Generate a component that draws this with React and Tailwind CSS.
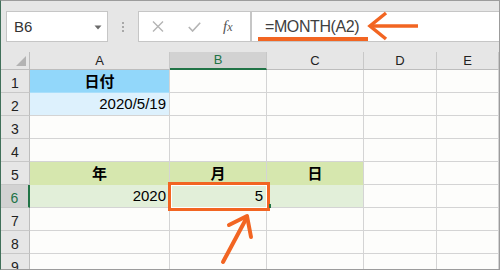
import clsx from "clsx";

const GRID = "border-r border-r-[#d4d4d4] border-b";

function Cell({ w, className, children }) {
  return (
    <div
      className={clsx(
        "relative shrink-0 h-full flex items-end px-[3px] pb-[3px] leading-none text-black",
        GRID,
        w,
        className
      )}
    >
      {children}
    </div>
  );
}

function RowHead({ n, active }) {
  return (
    <div
      className={clsx(
        "shrink-0 w-[29px] h-full flex items-end justify-center pb-[2px] text-[14px] leading-none border-b border-b-[#c8c8c8]",
        active
          ? "bg-[#d2d2d2] text-[#217346] border-r-2 border-r-[#217346]"
          : "bg-[#e6e6e6] text-[#222] border-r border-r-[#bdbdbd]"
      )}
    >
      {n}
    </div>
  );
}

function Row({ n, active, children }) {
  return (
    <div className="flex h-[23px] shrink-0">
      <RowHead n={n} active={active} />
      {children}
    </div>
  );
}

function EmptyCells({ from = 0 }) {
  const widths = ["w-[140px]", "w-[97px]", "w-[97px]", "w-[73px]", "flex-1"];
  return widths.slice(from).map((w, i) => (
    <Cell key={i} w={w} className="border-b-[#d4d4d4] bg-[#fdfdfb]" />
  ));
}

export default function App() {
  return (
    <div className="relative w-[500px] h-[270px] overflow-hidden border border-[#9c9c9c] border-l-[#41705a] bg-[#e6e6e6] font-['Liberation_Sans','Noto_Sans_CJK_JP',sans-serif]">
      {/* toolbar */}
      <div className="h-[51px] flex items-start pt-[10px] pl-[5px]">
        <div className="w-[102px] h-[31px] bg-white border border-[#c6c6c6] flex items-center justify-between pl-[7px] pr-[5px] pt-[2px]">
          <span className="text-[15px] text-[#333]">B6</span>
          <svg width="8" height="5" viewBox="0 0 8 5">
            <path d="M0.5 0.5h7L4 4.5z" fill="#6a6a6a" />
          </svg>
        </div>
        <div className="w-[30px] h-[31px] flex flex-col items-center justify-center gap-[2px]">
          <span className="w-[2px] h-[2px] bg-[#a8a8a8]" />
          <span className="w-[2px] h-[2px] bg-[#a8a8a8]" />
          <span className="w-[2px] h-[2px] bg-[#a8a8a8]" />
        </div>
        <div className="w-[113px] h-[31px] bg-white border border-[#c6c6c6] flex items-center pl-[13px]">
          <svg width="12" height="11" viewBox="0 0 12 11" className="mr-[24px]">
            <path d="M1 0.5l10 10M11 0.5l-10 10" stroke="#b4b4b4" strokeWidth="1.4" fill="none" />
          </svg>
          <svg width="13" height="10" viewBox="0 0 13 10" className="mr-[22px]">
            <path d="M0.8 5l3.8 4L12.2 0.8" stroke="#b4b4b4" strokeWidth="1.6" fill="none" />
          </svg>
          <span className="font-['Liberation_Serif',serif] italic text-[15px] text-[#555] leading-none">
            f<span className="text-[12px]">x</span>
          </span>
        </div>
        <div className="flex-1 h-[31px] bg-white border-y border-l border-[#c6c6c6] flex items-center pl-[13px]">
          <span className="text-[16px] text-[#404040] tracking-[-0.4px]">=MONTH(A2)</span>
        </div>
      </div>

      {/* column headers */}
      <div className="flex h-[18px]">
        <div className="shrink-0 w-[29px] h-full flex items-end justify-end pr-[3px] pb-[3px] border-r border-r-[#bdbdbd] border-b border-b-[#bdbdbd]">
          <svg width="10" height="10" viewBox="0 0 10 10">
            <path d="M10 0V10H0z" fill="#b3b3b3" />
          </svg>
        </div>
        {[
          ["A", "w-[140px]", false],
          ["B", "w-[97px]", true],
          ["C", "w-[97px]", false],
          ["D", "w-[73px]", false],
          ["E", "flex-1", false],
        ].map(([l, w, on]) => (
          <div
            key={l}
            className={clsx(
              "shrink-0 h-full flex items-center justify-center text-[13px] border-r border-r-[#c8c8c8]",
              w,
              on
                ? "bg-[#d2d2d2] text-[#217346] border-b-2 border-b-[#217346]"
                : "bg-[#e6e6e6] text-[#222] border-b border-b-[#bdbdbd]"
            )}
          >
            {l}
          </div>
        ))}
      </div>

      {/* rows */}
      <Row n="1">
        <Cell w="w-[140px]" className="bg-[#92d7fa] border-b-[#a9dffb] justify-center font-bold text-[15px]">
          日付
        </Cell>
        <EmptyCells from={1} />
      </Row>
      <Row n="2">
        <Cell w="w-[140px]" className="bg-[#ddf1fd] border-b-[#d4d4d4] justify-end text-[15px] pb-[4px]">
          2020/5/19
        </Cell>
        <EmptyCells from={1} />
      </Row>
      <Row n="3">
        <EmptyCells />
      </Row>
      <Row n="4">
        <EmptyCells />
      </Row>
      <Row n="5">
        <Cell w="w-[140px]" className="bg-[#d6e7ae] border-b-transparent justify-center font-bold text-[15px]">
          年
        </Cell>
        <Cell w="w-[97px]" className="bg-[#d6e7ae] border-b-transparent justify-center font-bold text-[15px]">
          月
        </Cell>
        <Cell w="w-[97px]" className="bg-[#d6e7ae] border-b-transparent justify-center font-bold text-[15px]">
          日
        </Cell>
        <EmptyCells from={3} />
      </Row>
      <Row n="6" active>
        <Cell w="w-[140px]" className="bg-[#e2efd9] border-b-[#d4d4d4] justify-end text-[15px] pb-[4px]">
          2020
        </Cell>
        <Cell w="w-[97px]" className="z-10 bg-[#e2efd9] border-b-[#d4d4d4] justify-end text-[15px] pb-[4px]">
          5
          <div className="absolute left-[-2px] top-[-3px] w-[102px] h-[29px] border-[3px] border-[#f26522]">
            <div className="w-full h-full border border-white" />
          </div>
          <div className="absolute left-[99px] top-[19px] w-[2px] h-[4px] bg-[#217346]" />
        </Cell>
        <Cell w="w-[97px]" className="bg-[#e2efd9] border-b-[#d4d4d4]" />
        <EmptyCells from={3} />
      </Row>
      <Row n="7">
        <EmptyCells />
      </Row>
      <Row n="8">
        <EmptyCells />
      </Row>
      <Row n="9">
        <EmptyCells />
      </Row>

      {/* annotations */}
      <svg
        width="500"
        height="270"
        viewBox="0 0 500 270"
        className="absolute -left-px -top-px z-20 pointer-events-none"
      >
        <rect x="258" y="37" width="110" height="4" fill="#f26522" />
        <path d="M418 26H372" stroke="#f26522" strokeWidth="3.5" fill="none" />
        <path d="M386 13L370 26L386 39" stroke="#f26522" strokeWidth="3.5" fill="none" />
        <path d="M223 262L246 219" stroke="#f26522" strokeWidth="4" strokeLinecap="round" fill="none" />
        <path d="M229 225L247 216L251 237" stroke="#f26522" strokeWidth="4" strokeLinecap="round" strokeLinejoin="round" fill="none" />
      </svg>
    </div>
  );
}
